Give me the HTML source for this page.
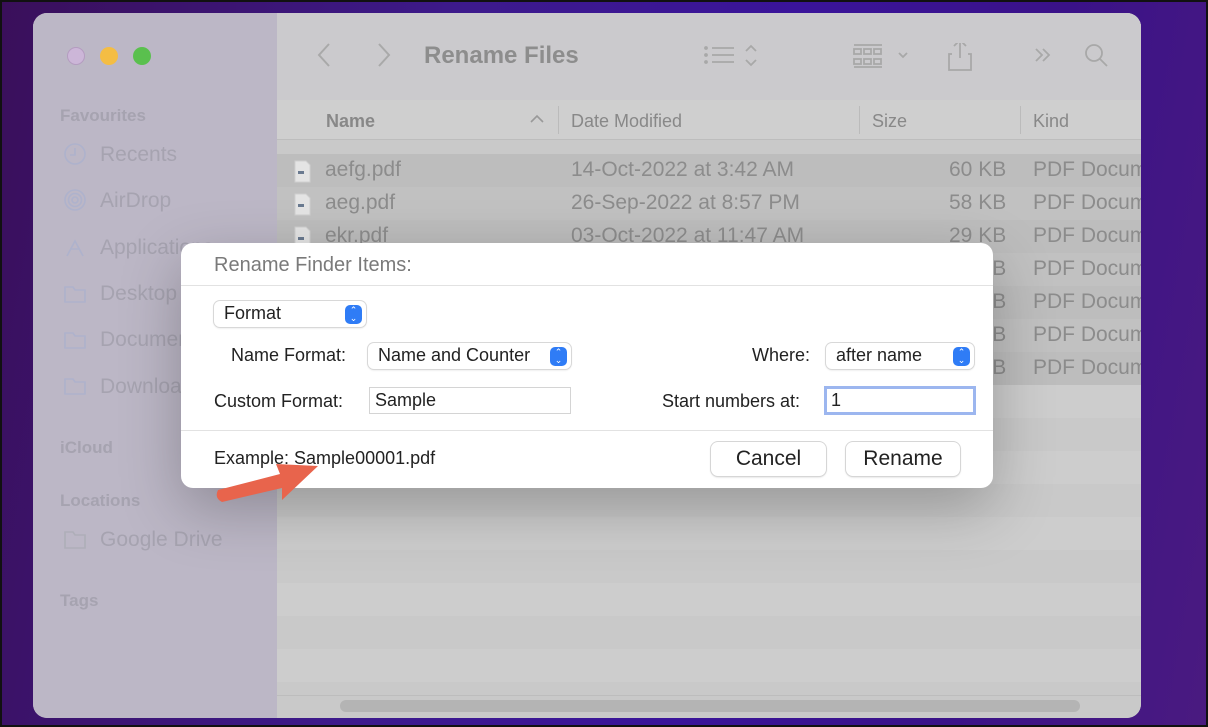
<!DOCTYPE html>
<html><head><meta charset="utf-8"><style>
*{margin:0;padding:0;box-sizing:border-box}
body{width:1208px;height:727px;overflow:hidden;font-family:"Liberation Sans",sans-serif;background:linear-gradient(100deg,#3a0f5a 0%,#3d1a8c 35%,#3a149a 60%,#3a1288 80%,#4a1a80 100%);position:relative}
.frame{position:absolute;inset:0;border:2px solid #111;pointer-events:none}
.win{position:absolute;left:33px;top:13px;width:1108px;height:705px;border-radius:14px;overflow:hidden;background:#c9c9c9}
.side{position:absolute;left:0;top:0;width:244px;height:100%;background:#bcb7c6}
.main{position:absolute;left:244px;top:0;right:0;height:100%;background:#c9c9c9}
.tb{position:absolute;left:0;top:0;right:0;height:87px;background:#cbcacd}
.hdr{position:absolute;left:0;top:87px;right:0;height:40px;background:#cfcfcf;border-bottom:1px solid #bdbdbd;color:#888;font-size:18px}
.t{position:absolute;white-space:nowrap}
.sb{color:#a6a3b0;font-size:17px;font-weight:bold}
.si{color:#a6a3b0;font-size:21px}
.row{position:absolute;left:0;right:0;height:33px;font-size:21px;color:#8c8c8c}
.dlg{position:absolute;left:181px;top:243px;width:812px;height:245px;background:#fff;border-radius:12px;box-shadow:0 20px 60px rgba(0,0,0,.25)}
.lbl{position:absolute;font-size:18px;color:#222;white-space:nowrap}
.pop{position:absolute;height:26px;border-radius:6px;background:#fff;box-shadow:0 0 0 1px #d8d8d8,0 1px 2px rgba(0,0,0,.15);font-size:18px;color:#222;padding:2px 0 0 10px}
.arr{position:absolute;right:4px;top:4px;width:17px;height:19px;background:#2f7cf6;border-radius:5px;color:#fff;font-size:9px;line-height:8px;text-align:center;padding-top:1px}
.fld{position:absolute;height:27px;border:1px solid #d4d4d4;background:#fff;font-size:18px;color:#222;padding:2px 5px}
.btn{position:absolute;height:34px;border-radius:7px;background:#fff;box-shadow:0 0 0 1px #d6d6d6,0 1px 2px rgba(0,0,0,.2);font-size:21px;color:#222;text-align:center;line-height:33px}
</style></head><body>
<div class="win">
 <div class="side">
  <div style="position:absolute;left:34px;top:34px;width:18px;height:18px;border-radius:50%;background:#ccb6d8;border:1px solid #b49cc0"></div>
  <div style="position:absolute;left:67px;top:34px;width:18px;height:18px;border-radius:50%;background:#f4bd44"></div>
  <div style="position:absolute;left:100px;top:34px;width:18px;height:18px;border-radius:50%;background:#5ac04e"></div>
  <div class="t sb" style="left:27px;top:93px">Favourites</div>
  <div class="t si" style="left:67px;top:130px">Recents</div>
  <div class="t si" style="left:67px;top:176px">AirDrop</div>
  <div class="t si" style="left:67px;top:223px">Applications</div>
  <div class="t si" style="left:67px;top:269px">Desktop</div>
  <div class="t si" style="left:67px;top:315px">Documents</div>
  <div class="t si" style="left:67px;top:362px">Downloads</div>
  <div class="t sb" style="left:27px;top:425px">iCloud</div>
  <div class="t sb" style="left:27px;top:478px">Locations</div>
  <div class="t si" style="left:67px;top:515px">Google Drive</div>
  <div class="t sb" style="left:27px;top:578px">Tags</div>
  <svg style="position:absolute;left:30px;top:130px" width="26" height="270" fill="none" stroke="#aeb2cc" stroke-width="1.6">
   <circle cx="12" cy="11" r="10"/><path d="M12 5v7h-5"/>
   <circle cx="12" cy="57" r="3"/><circle cx="12" cy="57" r="6.5"/><circle cx="12" cy="57" r="10"/>
   <path d="M4 113l8-15 8 15M7 106h10"/>
   <path d="M2 144h8l2 3h10v12H2z"/><path d="M2 190h8l2 3h10v12H2z"/><path d="M2 236h8l2 3h10v12H2z"/>
  </svg>
  <svg style="position:absolute;left:30px;top:515px" width="26" height="24" fill="none" stroke="#aeaeb8" stroke-width="1.6"><path d="M2 4h8l2 3h10v13H2z"/></svg>
 </div>
 <div class="main">
  <div class="tb">
   <svg style="position:absolute;left:40px;top:28px" width="80" height="28" fill="none" stroke="#a9a9a9" stroke-width="2"><path d="M12 3L2 14l10 11M62 3l10 11-10 11"/></svg>
   <div class="t" style="left:147px;top:29px;font-size:24px;font-weight:bold;color:#8d8d8d">Rename Files</div>
   <svg style="position:absolute;left:425px;top:30px" width="440" height="30" fill="none" stroke="#a8a8a8" stroke-width="1.8">
    <path d="M10 5h22M10 12h22M10 19h22"/><circle cx="4" cy="5" r="1"/><circle cx="4" cy="12" r="1"/><circle cx="4" cy="19" r="1"/>
    <path d="M44 8l5-5 5 5M44 17l5 5 5-5"/>
    <path d="M152 2h28M152 24h28" /><rect x="152" y="6" width="7" height="5"/><rect x="162" y="6" width="7" height="5"/><rect x="172" y="6" width="7" height="5"/><rect x="152" y="16" width="7" height="5"/><rect x="162" y="16" width="7" height="5"/><rect x="172" y="16" width="7" height="5"/>
    <path d="M197 10l4 4 4-4"/>
    <path d="M250 11h-3v16h22V11h-3M258 -3v18M252 3l6-6 6 6"/>
    <path d="M334 6l6 6-6 6M341 6l6 6-6 6"/>
    <circle cx="392" cy="10" r="8"/><path d="M398 16l7 7"/>
   </svg>
  </div>
  <div class="hdr">
   <div class="t" style="left:49px;top:11px;font-weight:bold">Name</div>
   <svg style="position:absolute;left:253px;top:14px" width="14" height="10" fill="none" stroke="#999" stroke-width="1.6"><path d="M1 8l6-6 6 6"/></svg>
   <div style="position:absolute;left:281px;top:6px;width:1px;height:28px;background:#bbb"></div>
   <div class="t" style="left:294px;top:11px">Date Modified</div>
   <div style="position:absolute;left:582px;top:6px;width:1px;height:28px;background:#bbb"></div>
   <div class="t" style="left:595px;top:11px">Size</div>
   <div style="position:absolute;left:743px;top:6px;width:1px;height:28px;background:#bbb"></div>
   <div class="t" style="left:756px;top:11px">Kind</div>
  </div>
  <div class="row" style="top:141px;background:#bdbdbd"><span class="t" style="left:48px;top:4px">aefg.pdf</span><span class="t" style="left:294px;top:4px">14-Oct-2022 at 3:42 AM</span><span class="t" style="left:672px;top:4px">60 KB</span><span class="t" style="left:756px;top:4px">PDF Document</span></div>
  <div class="row" style="top:174px;background:#c1c1c1"><span class="t" style="left:48px;top:4px">aeg.pdf</span><span class="t" style="left:294px;top:4px">26-Sep-2022 at 8:57 PM</span><span class="t" style="left:672px;top:4px">58 KB</span><span class="t" style="left:756px;top:4px">PDF Document</span></div>
  <div class="row" style="top:207px;background:#bdbdbd"><span class="t" style="left:48px;top:4px">ekr.pdf</span><span class="t" style="left:294px;top:4px">03-Oct-2022 at 11:47 AM</span><span class="t" style="left:672px;top:4px">29 KB</span><span class="t" style="left:756px;top:4px">PDF Document</span></div>
  <div class="row" style="top:240px;background:#c1c1c1"><span class="t" style="left:672px;top:4px">18 KB</span><span class="t" style="left:756px;top:4px">PDF Document</span></div>
  <div class="row" style="top:273px;background:#bdbdbd"><span class="t" style="left:672px;top:4px">18 KB</span><span class="t" style="left:756px;top:4px">PDF Document</span></div>
  <div class="row" style="top:306px;background:#c1c1c1"><span class="t" style="left:672px;top:4px">18 KB</span><span class="t" style="left:756px;top:4px">PDF Document</span></div>
  <div class="row" style="top:339px;background:#bdbdbd"><span class="t" style="left:672px;top:4px">18 KB</span><span class="t" style="left:756px;top:4px">PDF Document</span></div>
  <svg style="position:absolute;left:16px;top:146px" width="20" height="90"><g fill="#e4e4e4" stroke="#cfcfcf"><path d="M2 2h11l4 4v17H2z"/><path d="M2 35h11l4 4v17H2z"/><path d="M2 68h11l4 4v17H2z"/></g><g fill="#6a7a90"><rect x="5" y="12" width="6" height="3"/><rect x="5" y="45" width="6" height="3"/><rect x="5" y="78" width="6" height="3"/></g></svg>
  <div style="position:absolute;left:0;right:0;top:372px;height:33px;background:#cdcdcd"></div>
  <div style="position:absolute;left:0;right:0;top:438px;height:33px;background:#cdcdcd"></div>
  <div style="position:absolute;left:0;right:0;top:504px;height:33px;background:#cdcdcd"></div>
  <div style="position:absolute;left:0;right:0;top:570px;height:33px;background:#cdcdcd"></div>
  <div style="position:absolute;left:0;right:0;top:636px;height:33px;background:#cdcdcd"></div>
  <div style="position:absolute;left:0;right:0;top:682px;height:1px;background:#bdbdbd"></div>
  <div style="position:absolute;left:63px;width:740px;top:687px;height:12px;border-radius:6px;background:#b4b4b4"></div>
 </div>
</div>
<div class="dlg">
 <div class="t" style="left:33px;top:11px;font-size:20px;color:#7a7a7a">Rename Finder Items:</div>
 <div style="position:absolute;left:0;right:0;top:42px;height:1px;background:#e2e2e2"></div>
 <div class="pop" style="left:33px;top:58px;width:152px">Format<div class="arr">⌃<br>⌄</div></div>
 <div class="lbl" style="left:50px;top:102px">Name Format:</div>
 <div class="pop" style="left:187px;top:100px;width:203px">Name and Counter<div class="arr">⌃<br>⌄</div></div>
 <div class="lbl" style="left:571px;top:102px">Where:</div>
 <div class="pop" style="left:645px;top:100px;width:148px">after name<div class="arr">⌃<br>⌄</div></div>
 <div class="lbl" style="left:33px;top:148px">Custom Format:</div>
 <div class="fld" style="left:188px;top:144px;width:202px">Sample</div>
 <div class="lbl" style="left:481px;top:148px">Start numbers at:</div>
 <div class="fld" style="left:643px;top:143px;width:152px;height:29px;border:3px solid #9cb6ef;padding:1px 4px">1</div>
 <div style="position:absolute;left:0;right:0;top:187px;height:1px;background:#e2e2e2"></div>
 <div class="lbl" style="left:33px;top:205px">Example: Sample00001.pdf</div>
 <div class="btn" style="left:530px;top:199px;width:115px">Cancel</div>
 <div class="btn" style="left:665px;top:199px;width:114px">Rename</div>
</div>
<svg style="position:absolute;left:212px;top:456px" width="110" height="50"><path d="M6 34 L68 18 L64 8 L106 10 L70 44 L70 32 L10 46 Q2 42 6 34Z" fill="#e8644c"/></svg>
<div class="frame"></div>
</body></html>
